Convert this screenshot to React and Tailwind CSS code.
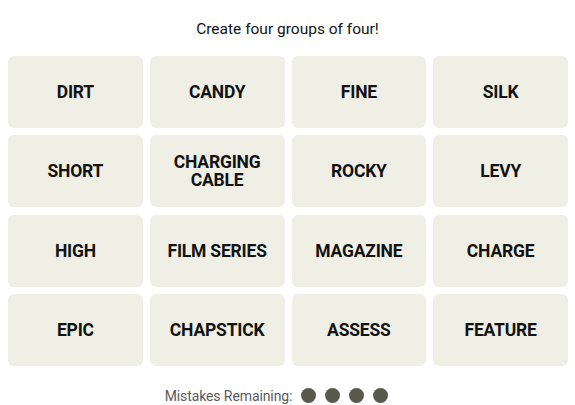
import React from 'react';

const words = [
  'DIRT', 'CANDY', 'FINE', 'SILK',
  'SHORT', 'CHARGING CABLE', 'ROCKY', 'LEVY',
  'HIGH', 'FILM SERIES', 'MAGAZINE', 'CHARGE',
  'EPIC', 'CHAPSTICK', 'ASSESS', 'FEATURE',
];

const App = () => {
  return (
    <div className="w-[575px] h-[405px] bg-white overflow-hidden" style={{ fontFamily: 'Roboto, "Liberation Sans", sans-serif' }}>
      {/* Header */}
      <div className="h-[56px] flex items-center justify-center">
        <p className="text-[15.5px] text-[#121212] leading-none pt-[3px]">Create four groups of four!</p>
      </div>

      {/* Grid */}
      <div className="grid grid-cols-4 gap-x-[7px] gap-y-[7.33px] pl-[8px] pr-[7px]">
        {words.map(w => (
          <button
            key={w}
            className="h-[72px] rounded-[6px] bg-[#efefe6] flex items-center justify-center text-center px-2"
          >
            <span className="text-[17.5px] font-bold text-[#121212] leading-[18px] tracking-[-0.2px] uppercase">{w}</span>
          </button>
        ))}
      </div>

      {/* Mistakes */}
      <div className="flex items-center justify-center gap-[9px] mt-[20px] pr-[22px]">
        <p className="text-[14px] leading-[20px] text-[#5a5a5a] tracking-[-0.1px]">Mistakes Remaining:</p>
        {[1, 2, 3, 4].map(i => (
          <span key={i} className="shrink-0 w-[15px] h-[15px] rounded-full bg-[#5a594e]" />
        ))}
      </div>
    </div>
  );
};

export default App;
